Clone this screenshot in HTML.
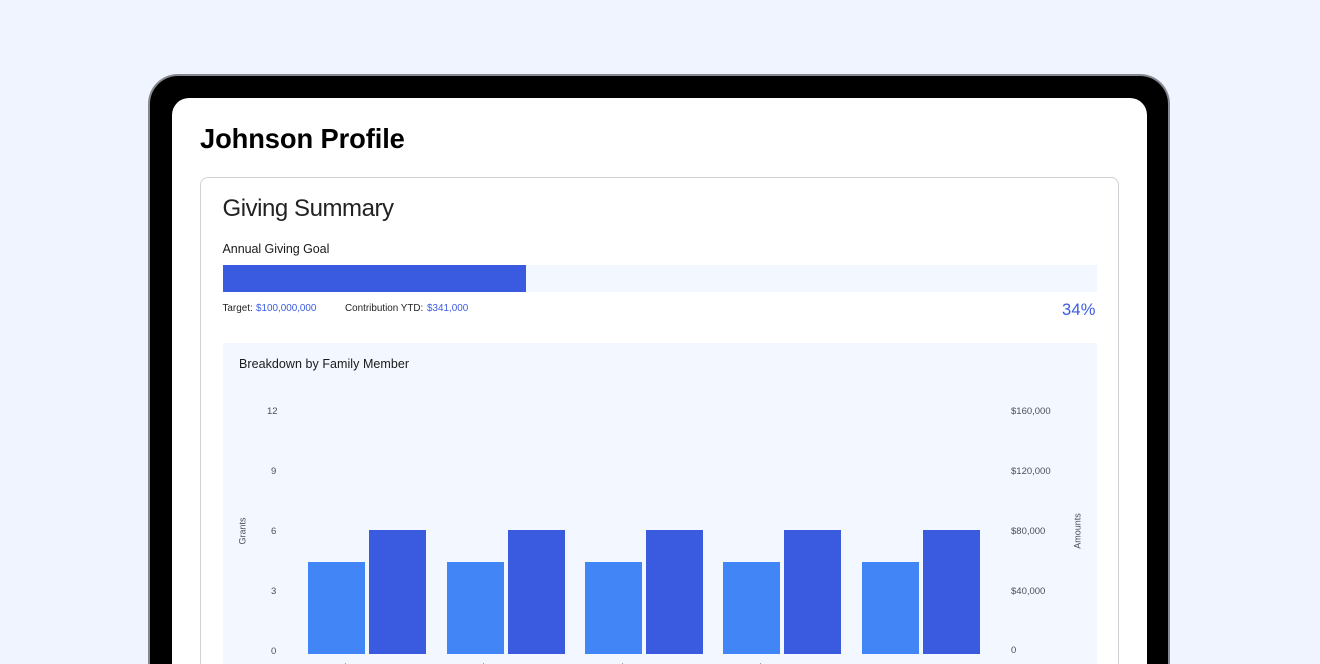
<!DOCTYPE html>
<html lang="en">
<head>
<meta charset="utf-8">
<title>Johnson Profile</title>
<style>
html,body{margin:0;padding:0;width:1320px;height:664px;overflow:hidden;background:#eff4ff;font-family:"Liberation Sans",sans-serif}
#root{position:relative;width:1320px;height:664px;overflow:hidden;background:#eff4ff}
.a{position:absolute}
.t{position:absolute;white-space:nowrap;line-height:1}
#frame{left:148px;top:74px;width:1022px;height:590px;box-sizing:border-box;background:#000;border:2px solid #85888e;border-bottom:none;border-radius:30px 30px 0 0}
#screen{left:172px;top:97.5px;width:975px;height:566.5px;background:#fff;border-radius:17px 17px 0 0}
#card{left:200px;top:177px;width:919px;height:487px;box-sizing:border-box;border:1.5px solid #ced2d6;border-bottom:none;border-radius:8px 8px 0 0;background:#fff}
#track{left:222.5px;top:264.5px;width:874px;height:27.5px;background:#f3f7ff}
#fill{left:222.5px;top:264.5px;width:303px;height:27.5px;background:#3a5be0}
#panel{left:222.5px;top:343px;width:874px;height:321px;background:#f3f7ff;border-radius:2px 2px 0 0}
.l{background:#4285f6;width:57px;top:562px;height:92px}
.d{background:#3a5be0;width:57px;top:530px;height:124px}
.tick{color:#4b4f58;font-size:9.5px}
.tk{background:#9a9da3;width:1px;height:1px;top:663px}
.blue{color:#3a5be0}
</style>
</head>
<body>
<div id="root">
<div class="a" id="frame"></div>
<div class="a" id="screen"></div>
<div class="t" style="left:200px;top:125px;font-size:27.3px;font-weight:700;color:#000;letter-spacing:-.1px">Johnson Profile</div>
<div class="a" id="card"></div>
<div class="t" style="left:222.5px;top:196.5px;font-size:24px;color:#222;letter-spacing:-.45px">Giving Summary</div>
<div class="t" style="left:222.5px;top:243px;font-size:12.5px;color:#1a1a1a;letter-spacing:-.05px">Annual Giving Goal</div>
<div class="a" id="track"></div>
<div class="a" id="fill"></div>
<div class="t" style="left:222.5px;top:304px;font-size:9.9px;color:#222">Target:</div>
<div class="t blue" style="left:256px;top:304px;font-size:9.9px">$100,000,000</div>
<div class="t" style="left:345px;top:304px;font-size:9.9px;color:#222">Contribution YTD:</div>
<div class="t blue" style="left:427px;top:304px;font-size:9.9px">$341,000</div>
<div class="t blue" style="left:1062px;top:301.5px;font-size:16.5px;letter-spacing:.2px">34%</div>
<div class="a" id="panel"></div>
<div class="t" style="left:239px;top:358px;font-size:12.5px;color:#1a1a1a;letter-spacing:.05px">Breakdown by Family Member</div>

<div class="t tick" style="left:267px;top:407px">12</div>
<div class="t tick" style="left:271px;top:467px">9</div>
<div class="t tick" style="left:271px;top:527px">6</div>
<div class="t tick" style="left:271px;top:587px">3</div>
<div class="t tick" style="left:271px;top:647px">0</div>

<div class="t tick" style="left:1011px;top:407px">$160,000</div>
<div class="t tick" style="left:1011px;top:467px">$120,000</div>
<div class="t tick" style="left:1011px;top:527px">$80,000</div>
<div class="t tick" style="left:1011px;top:587px">$40,000</div>
<div class="t tick" style="left:1011px;top:646px">0</div>

<div class="t tick" style="left:243px;top:531px;transform:translate(-50%,-50%) rotate(-90deg);font-size:9px">Grants</div>
<div class="t tick" style="left:1077.5px;top:530.5px;transform:translate(-50%,-50%) rotate(-90deg);font-size:9px">Amounts</div>

<div class="a l" style="left:308px"></div>
<div class="a d" style="left:369px"></div>
<div class="a l" style="left:447px"></div>
<div class="a d" style="left:508px"></div>
<div class="a l" style="left:585px"></div>
<div class="a d" style="left:646px"></div>
<div class="a l" style="left:723px"></div>
<div class="a d" style="left:784px"></div>
<div class="a l" style="left:862px"></div>
<div class="a d" style="left:923px"></div>

<div class="a tk" style="left:345px"></div>
<div class="a tk" style="left:483px"></div>
<div class="a tk" style="left:622px"></div>
<div class="a tk" style="left:760px"></div>
</div>
</body>
</html>
